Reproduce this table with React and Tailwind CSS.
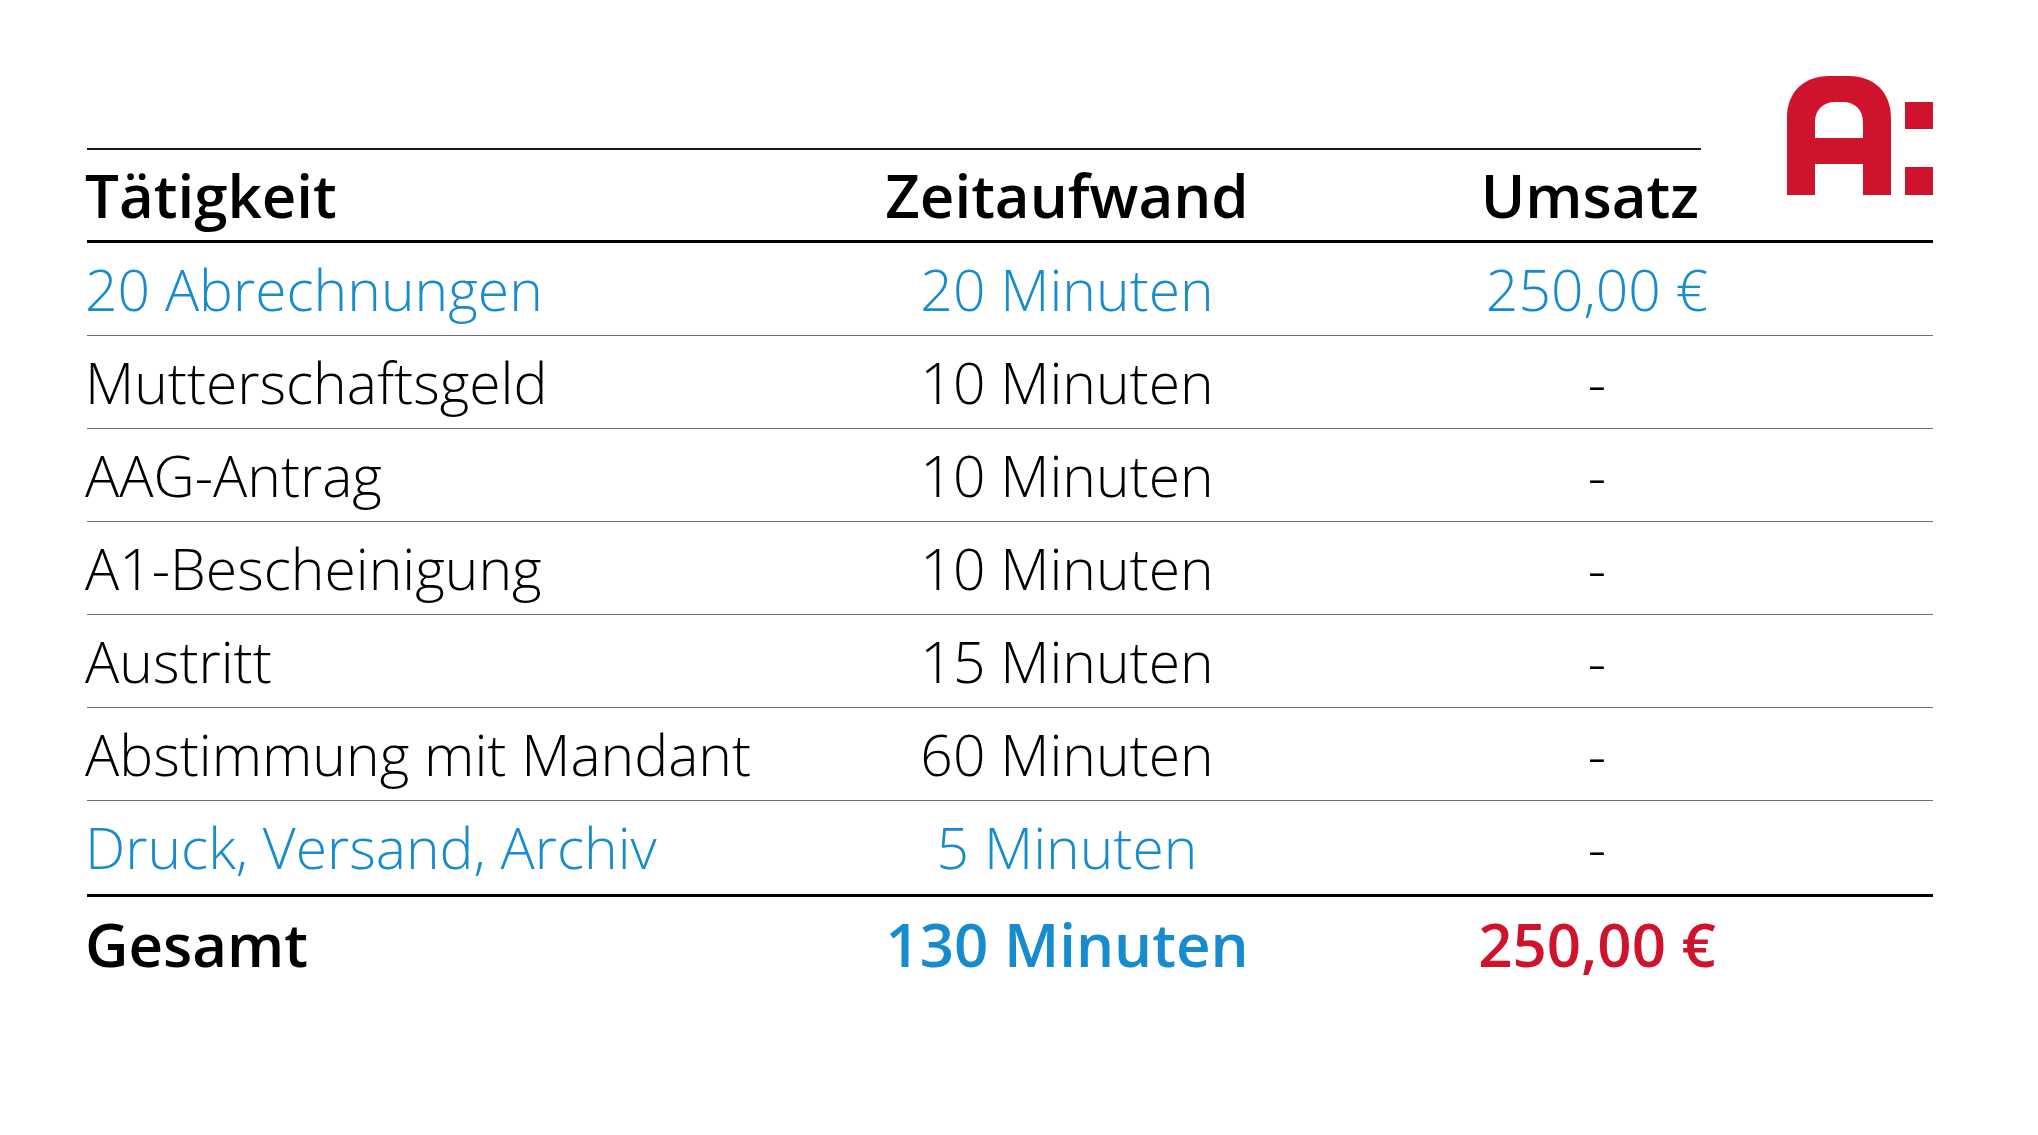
import React from 'react';

const rows = [
  { task: '20 Abrechnungen', time: '20 Minuten', sales: '250,00 €', blue: true, salesBlue: true },
  { task: 'Mutterschaftsgeld', time: '10 Minuten', sales: '-' },
  { task: 'AAG-Antrag', time: '10 Minuten', sales: '-' },
  { task: 'A1-Bescheinigung', time: '10 Minuten', sales: '-' },
  { task: 'Austritt', time: '15 Minuten', sales: '-' },
  { task: 'Abstimmung mit Mandant', time: '60 Minuten', sales: '-' },
  { task: 'Druck, Versand, Archiv', time: '5 Minuten', sales: '-', blue: true, last: true },
];

function Logo() {
  return (
    <svg width="146" height="119" viewBox="0 0 146 119" className="block">
      <path
        fill="#cf132d"
        fillRule="evenodd"
        d="M0 119 V42 C0 16 17 0 42 0 H62 C87 0 104 16 104 42 V119 H76 V88 H28 V119 Z M28 62 H76 V46 C76 34 68 26 56 26 H48 C36 26 28 34 28 46 Z"
      />
      <rect x="118" y="26" width="28" height="27" fill="#cf132d" />
      <rect x="118" y="91" width="28" height="28" fill="#cf132d" />
    </svg>
  );
}

export default function App() {
  return (
    <div className="min-h-screen w-[2038px] bg-white pt-[76px] pl-[87px] pr-[105px] font-['Open_Sans',sans-serif] text-black">
      {/* Header */}
      <div className="flex border-b-[3px] border-black">
        <div className="w-[1614px] mt-[72px] border-t-2 border-[#1a1a1a] grid grid-cols-[780px_400px_434px] h-[92px] items-end pb-[15px] text-[60px] font-semibold leading-none">
          <div className="-ml-[2px]">Tätigkeit</div>
          <div className="text-center">Zeitaufwand</div>
          <div className="text-right pr-[2px]">Umsatz</div>
        </div>
        <div className="flex-1 flex justify-end items-start">
          <Logo />
        </div>
      </div>

      {/* Rows */}
      {rows.map((r) => (
        <div
          key={r.task}
          className={`grid grid-cols-[780px_400px_660px] items-center text-[57px] font-light leading-none ${
            r.last ? 'h-[96px] border-b-[3px] border-black' : 'h-[93px] border-b border-[#707070]'
          }`}
        >
          <div className={`-ml-[2px] ${r.blue ? 'text-[#168bcd]' : ''}`}>{r.task}</div>
          <div className={`text-center ${r.blue ? 'text-[#168bcd]' : ''}`}>{r.time}</div>
          <div className={`text-center ${r.salesBlue ? 'text-[#168bcd]' : ''}`}>{r.sales}</div>
        </div>
      ))}

      {/* Total */}
      <div className="grid grid-cols-[780px_400px_660px] items-center h-[93px] text-[60px] font-semibold leading-none">
        <div className="-ml-[2px]">Gesamt</div>
        <div className="text-center text-[#168bcd]">130 Minuten</div>
        <div className="text-center text-[#cf132d]">250,00 €</div>
      </div>
    </div>
  );
}
